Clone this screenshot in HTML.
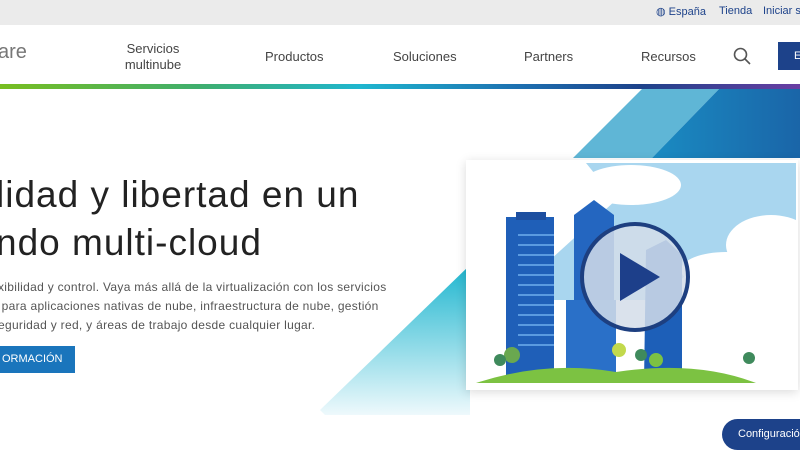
<!DOCTYPE html>
<html><head><meta charset="utf-8"><style>
*{margin:0;padding:0;box-sizing:border-box}
body{width:800px;height:450px;overflow:hidden;background:#fff;font-family:"Liberation Sans",sans-serif;position:relative}
.top{position:absolute;left:0;top:0;width:800px;height:25px;background:#ebebeb;font-size:11px;color:#1d428a;white-space:nowrap}
.top span{position:absolute;top:5px;white-space:nowrap}
.nav{position:absolute;top:25px;left:0;width:800px;height:60px;background:#fff;color:#444;font-size:13px}
.nav .i{position:absolute;text-align:center;line-height:16px}
.grad{position:absolute;top:84px;left:0;width:800px;height:5px;background:linear-gradient(90deg,#78be20 0%,#3eae6e 25%,#1fb6cf 45%,#1d6fb0 65%,#1d428a 80%,#6a3ea3 100%)}
h1{position:absolute;left:-4px;top:171px;font-weight:400;font-size:37px;line-height:48px;color:#222;white-space:nowrap;letter-spacing:1px}
p{position:absolute;left:-2px;top:278px;font-size:12px;line-height:19px;color:#555;white-space:nowrap;letter-spacing:0.3px}
.btn{position:absolute;left:0;top:346px;width:75px;height:27px;background:#1a75bc;color:#fff;font-size:11px;line-height:27px;padding-left:2px}
.cfg{position:absolute;left:722px;top:419px;width:100px;height:31px;border-radius:16px;background:#1d428a;color:#fff;font-size:11px;line-height:31px;padding-left:16px;white-space:nowrap}
</style></head><body>
<svg style="position:absolute;left:0;top:0" width="800" height="450">
<defs>
<linearGradient id="t" x1="0" y1="0" x2="0" y2="1"><stop offset="0" stop-color="#1fb6cf"/><stop offset="1" stop-color="#eef9fc"/></linearGradient>
<linearGradient id="d" x1="0" y1="0" x2="1" y2="0"><stop offset="0" stop-color="#1a8bc2"/><stop offset="1" stop-color="#1a65a8"/></linearGradient>
</defs>
<polygon points="320,410 470,265 470,415 325,415" fill="url(#t)"/>
<polygon points="643,88 720,88 652,158 573,158" fill="#5fb6d6"/>
<polygon points="720,88 800,88 800,158 652,158" fill="url(#d)"/>
</svg>
<div class="top"><span style="left:656px">◍ España</span><span style="left:719px">Tienda</span><span style="left:763px">Iniciar s</span></div>
<div class="nav">
<div class="i" style="left:-2px;top:19px;font-size:20px;color:#777">are</div>
<div class="i" style="left:120px;top:16px;width:66px">Servicios<br>multinube</div>
<div class="i" style="left:265px;top:24px">Productos</div>
<div class="i" style="left:393px;top:24px">Soluciones</div>
<div class="i" style="left:524px;top:24px">Partners</div>
<div class="i" style="left:641px;top:24px">Recursos</div>
<svg style="position:absolute;left:733px;top:22px" width="18" height="18"><circle cx="7.5" cy="7.5" r="6" fill="none" stroke="#555" stroke-width="1.6"/><line x1="12" y1="12" x2="17" y2="17" stroke="#555" stroke-width="1.6"/></svg>
<div style="position:absolute;left:778px;top:17px;width:30px;height:28px;background:#1d428a;color:#fff;font-size:11px;line-height:28px;padding-left:16px">E</div>
</div>
<div class="grad"></div>
<h1>lidad y libertad en un<br>ndo multi-cloud</h1>
<p>xibilidad y control. Vaya más allá de la virtualización con los servicios<br>&nbsp;para aplicaciones nativas de nube, infraestructura de nube, gestión<br>eguridad y red, y áreas de trabajo desde cualquier lugar.</p>
<div class="btn">ORMACIÓN</div>
<svg style="position:absolute;left:466px;top:160px;box-shadow:0 2px 10px rgba(0,0,0,.15)" width="332" height="230">
<rect width="332" height="230" fill="#fff"/>
<polygon points="120,3 330,3 330,110 300,140 40,140 150,40" fill="#a9d6ef"/>
<polygon points="230,105 330,105 330,223 110,223" fill="#fff"/>
<ellipse cx="165" cy="25" rx="50" ry="20" fill="#fff"/>
<ellipse cx="305" cy="85" rx="45" ry="30" fill="#fff"/>
<ellipse cx="260" cy="110" rx="45" ry="18" fill="#fff"/>
<rect x="40" y="57" width="48" height="160" fill="#1f5fb8"/>
<rect x="50" y="52" width="30" height="8" fill="#1d4fa0"/>
<g stroke="#5a9ae0" stroke-width="2"><line x1="52" y1="75" x2="88" y2="75"/><line x1="52" y1="85" x2="88" y2="85"/><line x1="52" y1="95" x2="88" y2="95"/><line x1="52" y1="105" x2="88" y2="105"/><line x1="52" y1="115" x2="88" y2="115"/><line x1="52" y1="125" x2="88" y2="125"/><line x1="52" y1="135" x2="88" y2="135"/><line x1="52" y1="145" x2="88" y2="145"/><line x1="52" y1="155" x2="88" y2="155"/><line x1="52" y1="165" x2="88" y2="165"/><line x1="52" y1="175" x2="88" y2="175"/><line x1="52" y1="185" x2="88" y2="185"/></g>
<polygon points="108,55 128,40 148,55 148,220 108,220" fill="#2466c0"/>
<rect x="100" y="140" width="50" height="80" fill="#2a70c8"/>
<polygon points="180,90 200,80 216,95 216,222 178,222" fill="#1d5fb8"/>
<circle cx="169" cy="117" r="53" fill="#d3dde9" fill-opacity=".85" stroke="#1d3f80" stroke-width="4"/>
<polygon points="154,93 154,141 194,117" fill="#1d3f8a"/>
<path d="M10,223 Q80,200 150,212 Q230,200 290,223 Z" fill="#7cc242"/>
<circle cx="46" cy="195" r="8" fill="#6aa84f"/><circle cx="34" cy="200" r="6" fill="#3f8a5c"/>
<circle cx="153" cy="190" r="7" fill="#c2d94c"/><circle cx="175" cy="195" r="6" fill="#3f8a5c"/>
<circle cx="190" cy="200" r="7" fill="#7cc242"/><circle cx="283" cy="198" r="6" fill="#3f8a5c"/>
</svg>
<div class="cfg">Configuración</div>
</body></html>
